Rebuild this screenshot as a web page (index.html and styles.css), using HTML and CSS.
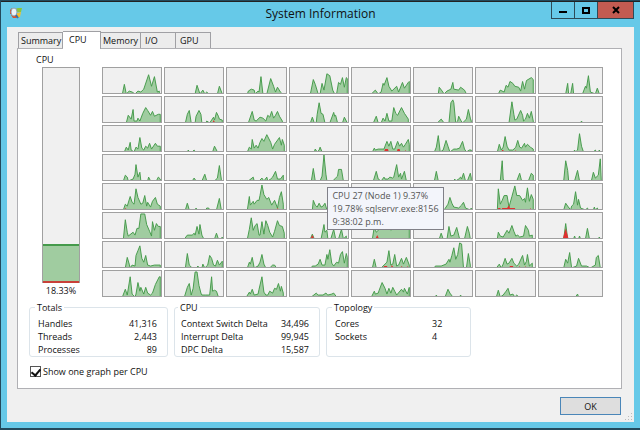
FILE: index.html
```html
<!DOCTYPE html>
<html lang="en">
<head>
  <meta charset="UTF-8" />
  <meta name="viewport" content="width=device-width, initial-scale=1" />
  <title>System Information</title>
  <link rel="stylesheet" href="styles.css">
</head>
<body>
  <div class="window">
    <header class="titlebar">
      <svg class="app-icon" width="14" height="14" viewBox="0 0 14 14" aria-hidden="true">
        <path d="M6 3 L9 2 L13 2 L12 6 L8 6 Z" fill="#8cc63c" />
        <path d="M8 7 L12 6 L11 11 L8 12 Z" fill="#f2c12e" />
        <path d="M2 9 L6 8 L8 12 L4 12 Z" fill="#d8532b" />
        <path d="M1 4 L3 2 L3 8 L1 8 Z" fill="#d8532b" />
        <ellipse cx="5" cy="6" rx="3" ry="4" fill="#e9f2f8" stroke="#8fa0ae" />
        <path d="M7 9 L9 12" stroke="#3b6ea8" stroke-width="2" />
      </svg>
      <h1 class="title">System Information</h1>
      <div class="window-buttons">
        <button class="minimize" aria-label="Minimize"><svg width="10" height="10" viewBox="0 0 10 10"><path d="M1 7H9" stroke="#000" stroke-width="2" /></svg></button>
        <button class="maximize" aria-label="Maximize"><svg width="10" height="10" viewBox="0 0 10 10"><rect x="2" y="3" width="6" height="5" fill="none" stroke="#000" stroke-width="2" /></svg></button>
        <button class="close" aria-label="Close"><svg width="10" height="10" viewBox="0 0 10 10"><path d="M2 2L8 8M8 2L2 8" stroke="#000" stroke-width="2" /></svg></button>
      </div>
    </header>

    <div class="client">
      <nav class="tabs" role="tablist">
        <button class="tab tab-summary" role="tab">Summary</button>
        <button class="tab tab-cpu active" role="tab" aria-selected="true">CPU</button>
        <button class="tab tab-memory" role="tab">Memory</button>
        <button class="tab tab-io" role="tab">I/O</button>
        <button class="tab tab-gpu" role="tab">GPU</button>
      </nav>

      <main class="panel">
        <h2 class="section-label">CPU</h2>
        <div class="usage">
          <div class="gauge-column">
            <div class="gauge"><div class="gauge-fill"></div></div>
            <div class="gauge-value">18.33%</div>
          </div>
          <div class="graphs" id="graphs">
            <div class="tooltip" role="tooltip">CPU 27 (Node 1) 9.37%<br>19.78% sqlservr.exe:8156<br>9:38:02 p.m.</div>
          </div>
        </div>

        <div class="groups">
          <fieldset class="group">
            <legend>Totals</legend>
            <table>
              <tr><th scope="row">Handles</th><td>41,316</td></tr>
              <tr><th scope="row">Threads</th><td>2,443</td></tr>
              <tr><th scope="row">Processes</th><td>89</td></tr>
            </table>
          </fieldset>
          <fieldset class="group group-cpu">
            <legend>CPU</legend>
            <table>
              <tr><th scope="row">Context Switch Delta</th><td>34,496</td></tr>
              <tr><th scope="row">Interrupt Delta</th><td>99,945</td></tr>
              <tr><th scope="row">DPC Delta</th><td>15,587</td></tr>
            </table>
          </fieldset>
          <fieldset class="group group-topology">
            <legend>Topology</legend>
            <table>
              <tr><th scope="row">Cores</th><td>32</td></tr>
              <tr><th scope="row">Sockets</th><td>4</td></tr>
            </table>
          </fieldset>
        </div>

        <div class="option">
          <input type="checkbox" id="per-cpu" checked />
          <label for="per-cpu">Show one graph per CPU</label>
        </div>
      </main>

      <footer class="actions">
        <button class="ok">OK</button>
      </footer>
      <svg class="grip" width="8" height="8" viewBox="0 0 8 8" fill="#bbb" aria-hidden="true">
        <path d="M6 0h1v1h-1zM3 3h1v1h-1zM6 3h1v1h-1zM0 6h1v1h-1zM3 6h1v1h-1zM6 6h1v1h-1z" />
      </svg>
    </div>
  </div>
  <script src="graphs.js"></script>
</body>
</html>
```
FILE: graphs.js
```js
// One entry per CPU, left to right and top to bottom: "x,load x,load ..."
const cpus = [
  '20,0 22,9 24,0 27,2 30,1 33,0 36,2 39,1 42,4 47,19 50,7 53,17 56,1 58,2',
  '31,0 33,8 36,0 39,3 41,0 43,1 45,0 54,0 56,7 59,0',
  '21,0 22,2 25,4 28,3 29,0 32,2 33,1 35,17 37,0 41,0 45,15 48,7 50,1 52,6 55,1 57,0',
  '21,0 24,14 26,9 29,0 31,0 33,10 35,3 38,20 41,18 44,3 46,0 48,0 50,11 52,9 54,16 56,6 58,16 59,15',
  '20,0 24,3 27,0 30,1 32,10 33,8 36,16 38,7 41,2 46,7 48,1 52,11 54,5 58,11 59,12',
  '25,0 26,6 29,2 31,0 34,2 38,4 40,11 41,4 46,3 48,6 52,3 54,0',
  '23,0 25,3 29,1 31,8 33,6 35,12 38,10 40,7 44,6 46,2 48,12 50,4 52,13 57,16 59,14',
  '27,0 29,10 30,0 32,0 34,10 35,0 44,0 47,7 48,5 50,18 52,1 57,0 59,5 61,0',

  '24,0 26,7 29,3 31,13 32,1 35,1 36,4 38,1 41,9 44,15 46,12 49,7 51,11 53,6 57,8 59,8',
  '21,0 23,8 25,12 27,0 31,0 32,6 35,12 37,8 38,0 42,0 43,1 46,0 50,5 51,2 53,10 55,6 56,3 59,2',
  '22,0 26,11 28,2 30,1 34,5 37,4 40,1 42,7 44,5 46,11 48,4 50,7 52,11 54,6 57,1',
  '21,0 23,5 25,0 27,0 28,8 30,20 32,9 34,8 36,0 41,0 45,10 46,6 47,7 49,0 54,0 56,5 59,0',
  '22,0 25,6 27,0 30,0 32,4 34,1 36,9 38,1 41,1 43,15 45,9 47,7 51,15 54,9 58,3',
  '24,0 28,3 31,0 36,0 38,20 40,23 41,20 43,0 45,1 46,6 48,2 50,0 52,1 54,3 56,13 58,4 59,1',
  '34,0 37,21 39,8 40,2 42,3 46,12 48,7 49,1 51,3 53,9 55,4 57,11 59,1',
  '42,0 43,1 44,0',

  '22,0 24,4 26,1 28,9 29,1 32,0 34,4 36,2 38,14 40,3 42,1 44,5 46,3 48,8 50,2 54,8 56,5 59,5',
  '23,0 24,1 25,0 28,0 30,1 31,0 49,0 51,5 53,1 54,0',
  '21,0 23,4 25,2 26,12 28,3 30,6 32,3 34,9 36,13 38,10 41,17 45,9 47,2 49,7 54,14 56,6 57,12 59,6',
  '25,0 26,2 28,0 30,1 31,4 33,0',
  '21,0 23,3 24,1 27,2 33,2 34,5 36,10 38,5 40,10 42,2 44,2 47,10 49,5 51,8 53,4 55,7 58,12 59,7',
  '21,0 23,4 25,16 27,0 30,1 33,11 35,5 37,0 41,2 44,2 47,3 50,10 52,2 54,0 57,1 59,1',
  '22,0 24,7 26,1 28,4 30,15 32,5 34,1 38,1 41,4 43,11 45,4 47,3 50,8 51,4 53,7 56,4 59,2',
  '35,0 36,1 37,0 39,1 41,18 43,5 45,0 55,0 57,1 58,0 60,0 61,1 62,0',

  '21,0 23,5 25,3 26,0 31,1 33,6 34,16 36,3 38,8 39,0 46,0 47,3 49,0 55,0 57,3 59,1',
  '28,0 30,2 32,0 38,0 41,6 43,0 51,0 54,2 56,15 58,1',
  '22,0 27,3 28,0 33,0 36,2 38,0 41,3 42,0 45,1 47,3 50,9 52,1 55,1 58,5',
  '22,0 24,12 26,0 31,0 33,4 35,26 37,6 38,0 44,0 47,2 49,4 50,11 53,11 55,0',
  '22,0 25,9 27,1 30,0 33,3 34,1 37,1 39,3 42,2 43,3 46,16 48,3 50,7 51,1 54,9 56,0',
  '21,0 23,9 25,0 41,0 42,1 43,0 46,1 48,3 49,1 51,7 53,0 55,0 58,7 59,2',
  '25,0 27,20 28,1 29,0 42,0 45,7 47,0 54,0 57,7 59,5',
  '25,0 27,20 29,10 30,0 36,0 39,10 41,0 53,0 55,8 57,2 60,5 62,22 63,0',

  '21,0 23,5 25,3 28,13 30,7 32,5 34,21 36,12 39,5 41,6 43,14 45,3 46,7 49,2 51,8 54,12 56,5 59,3',
  '21,0 23,6 25,0 31,0 32,1 33,0 42,0 43,1 45,1 46,0 53,0 56,11 58,0',
  '21,0 23,13 24,4 27,8 28,5 31,9 33,9 34,14 36,25 38,15 41,10 43,12 46,4 49,9 52,1 54,12 56,18 58,5',
  '23,0 24,9 26,4 28,2 30,6 32,2 34,3 36,6 38,0',
  '22,0 24,6 27,2 34,9 38,3 44,8 50,2 55,7',
  '31,0 35,5 37,12 39,6 41,2 46,1 49,4 51,7 53,1 58,0 59,1',
  '22,0 23,21 25,5 27,9 29,14 32,14 34,2 37,13 40,24 42,14 45,14 48,9 50,11 51,7 53,22 55,8 57,15 59,10',
  '25,0 27,6 29,3 32,0 33,3 35,5 37,18 39,4 40,10 42,1 47,0 49,1 50,0 55,0 56,2 57,0 59,1 60,0',

  '21,0 23,19 25,6 26,2 31,6 33,3 35,10 37,10 39,25 43,25 45,14 48,7 50,2 51,17 53,8 55,15 57,12 59,12',
  '20,0 23,3 28,3 30,5 31,3 33,12 35,4 36,14 38,3 40,0 51,0 53,5 55,0 58,0 59,1',
  '21,0 23,9 25,21 27,8 29,13 31,15 33,3 34,3 36,17 38,4 40,18 42,13 44,6 47,1 49,7 52,18 54,13 57,12 59,5',
  '21,0 23,4 25,0 32,0 35,14 36,6 38,8 39,0 42,0 45,9 47,0 50,0 53,9 55,0 58,2',
  '21,0 23,12 25,6 28,9 31,14 34,10 36,13 40,8 43,11 47,9 51,14 54,12 59,12',
  '26,0 28,5 30,0 34,0 36,12 38,2 41,3 44,11 46,3 47,0 52,0 55,12 57,5 58,0',
  '22,0 23,6 25,2 28,1 32,8 34,5 37,13 39,7 41,2 43,3 45,1 49,2 51,13 54,8 55,2 58,3',
  '25,0 27,15 29,0 35,0 36,2 37,0 40,0 41,2 42,0 47,0 49,10 51,0 60,0 61,1 62,0',

  '23,0 25,10 27,3 28,0 30,2 33,1 34,12 36,17 38,22 40,9 42,5 44,12 46,2 49,1 53,2 59,2',
  '21,0 23,14 25,2 28,0 32,0 34,1 35,0 38,0 39,3 41,0 44,2 46,12 48,9 50,2 52,1 54,7 56,2 59,6',
  '21,0 23,5 24,3 26,10 28,0 32,1 34,5 36,13 38,3 40,0 44,0 47,2 49,2 51,0',
  '22,0 23,1 26,1 29,3 31,8 33,2 36,2 38,13 39,8 41,18 43,4 45,1 48,5 50,4 52,13 54,16 56,4 58,14 59,10',
  '21,0 23,8 25,0 30,0 33,2 36,5 38,17 40,2 42,3 44,13 46,1 48,2 51,9 53,3 56,10 59,2',
  '21,0 22,1 28,1 33,3 36,8 37,5 39,12 41,20 43,8 45,13 47,25 49,24 51,0 54,0 56,14 58,2',
  '21,0 24,3 26,0 28,3 30,9 32,3 34,4 37,9 39,4 42,1 44,3 48,12 50,2 52,6 53,13 55,1 58,4',
  '25,0 27,8 29,4 31,15 33,0 38,1 40,9 43,1 48,1 52,0 57,2 58,10 60,12 62,0',

  '20,0 23,7 25,1 28,20 30,2 33,0 34,2 36,14 38,5 39,9 42,2 44,9 46,3 49,1 51,3 54,12 58,20 59,20',
  '20,0 23,9 25,13 27,1 29,8 31,25 33,25 35,11 37,3 38,1 42,1 46,1 48,20 49,5 51,6 53,5 55,0',
  '20,0 23,4 24,2 26,7 28,1 32,2 33,7 36,20 38,4 40,1 42,1 44,5 47,3 49,8 51,7 53,13 55,5 56,10 58,3',
  '22,0 27,3 29,1 34,1 37,3 39,1 43,2 45,3 48,0',
  '20,0 23,5 24,2 27,3 28,6 31,14 34,8 36,2 38,8 40,3 42,9 44,5 46,1 51,7 53,4 54,8 57,2 59,9',
  '22,0 23,1 24,0 32,0 35,7 37,3 40,0 47,0 48,1 49,0',
  '21,0 23,6 25,0 28,1 31,5 33,8 35,1 38,2 40,0 42,1 44,0',
  '37,0 39,2 40,0'
];

// Kernel time, in red, for the CPUs that have any
const kernel = {
  9: '49,0 50,2 52,0',
  20: '33,0 34,2 37,2 38,0 46,0 47,2 49,2 50,0 54,0 55,1 56,0',
  22: '26,0 27,1 28,1 29,0 40,0 41,1 42,0',
  32: '22,0 23,1 25,0',
  34: '51,0 52,1 54,0',
  38: '22,0 23,1 25,1 26,0 27,1 30,1 32,1 34,4 35,1 40,1 41,0 55,0 56,1 57,0',
  43: '21,0 23,3 25,0',
  44: '24,0 26,3 28,0',
  47: '24,0 27,10 30,0',
  52: '32,0 33,1 36,1 37,0 40,0 41,2 43,0 50,0 51,1 53,0 56,0 57,1 58,0',
  54: '34,0 35,1 38,1 39,0 44,0 45,1 46,0 50,0 51,1 52,0'
};

const HEIGHT = 26;
const BASE = HEIGHT + 1; // idle stretches run just below the visible area
const graphs = document.getElementById('graphs');

function area(data, name) {
  const points = data.split(' ').map(p => p.split(',').map(Number));
  const line = points.map(([x, load]) => `${x},${load ? HEIGHT - load : BASE}`).join(' ');
  const first = points[0][0];
  const last = points[points.length - 1][0];
  return `<polygon class="${name}" points="${first},${BASE} ${line} ${last},${BASE}" />`;
}

cpus.forEach((data, i) => {
  const width = i % 8 === 7 ? 64 : 60; // last column is a bit wider
  const cell = document.createElement('div');
  cell.className = 'graph';
  cell.innerHTML = `
    <svg viewBox="0 0 ${width} ${HEIGHT}" preserveAspectRatio="none">
      ${area(data, 'load')}
      ${kernel[i] ? area(kernel[i], 'kernel') : ''}
    </svg>`;
  graphs.appendChild(cell);
});
```
FILE: styles.css
```css
* {
  box-sizing: border-box;
}
body {
  margin: 0;
  min-height: 100vh;
  display: flex;
  background: #234a5c;
  font-family: "Open Sans", "Noto Sans", sans-serif;
  font-size: 9px;
  line-height: 13px;
  color: #111;
}
button {
  font: inherit;
  color: inherit;
  padding: 0;
}
.window {
  flex: 1;
  display: flex;
  flex-direction: column;
  margin: 1px 0 2px 1px;
  padding: 0 6px 6px;
  background: #66c9e8;
  border-top: 1px solid #222;
}

/* Title bar */
.titlebar {
  display: grid;
  grid-template-columns: 83px 1fr 83px;
  height: 25px;
}
.app-icon {
  margin: 4px 0 0 2px;
}
.title {
  margin: 0;
  font-size: 12px;
  font-weight: 400;
  line-height: 24px;
  text-align: center;
}
.window-buttons {
  display: flex;
  height: 17px;
}
.window-buttons button {
  display: flex;
  align-items: center;
  justify-content: center;
  width: 23px;
  background: none;
  border: 1px solid #2d4b58;
  border-top: 0;
  border-right: 0;
}
.window-buttons .close {
  flex: 1;
  background: #c35b51;
  border-right: 1px solid #2d4b58;
}

/* Tabs */
.client {
  position: relative;
  flex: 1;
  display: flex;
  flex-direction: column;
  padding: 4px 12px 0 10px;
  background: #f0f0f0;
}
.tabs {
  display: flex;
  align-items: flex-end;
  height: 17px;
  padding-left: 1px;
}
.tab {
  height: 16px;
  background: #ececec;
  border: 1px solid #a0a0a4;
  border-left-width: 0;
  border-bottom: 0;
  text-align: left;
  padding-left: 4px;
}
.tab-summary {
  width: 45px;
  border-left-width: 1px;
  padding-left: 2px;
}
.tab.active {
  width: 38px;
  height: 18px;
  margin-bottom: -1px;
  padding: 0 0 3px 6px;
  background: #fff;
  z-index: 1;
}
.tab-memory {
  width: 40px;
  padding-left: 2px;
}
.tab-io, .tab-gpu {
  width: 35px;
}
.panel {
  flex: 1;
  padding: 4px 18px 8px 11px;
  background: #fff;
  border: 1px solid #b0b0b4;
}

/* Gauge and graphs */
.section-label {
  margin: 0 0 1px 7px;
  font-size: 9px;
  font-weight: 400;
}
.usage {
  display: flex;
  gap: 22px;
  padding-left: 13px;
}
.gauge-column {
  display: flex;
  flex-direction: column;
  width: 38px;
}
.gauge {
  flex: 1;
  display: flex;
  align-items: flex-end;
  background: #f0f0f0;
  border: 1px solid #a0a0a0;
  border-bottom: 0;
}
.gauge-fill {
  width: 100%;
  height: 18%;
  background: #a0cca0;
  border-top: 2px solid #459a4b;
  border-bottom: 2px solid #c84038;
}
.gauge-value {
  padding-top: 1px;
  text-align: center;
}
.graphs {
  position: relative;
  flex: 1;
  display: grid;
  grid-template-columns: repeat(7, 60fr) 65fr;
  gap: 2px;
}
.graph {
  height: 27px;
  background: #f0f0f0;
  border: 1px solid #a0a0a0;
}
.graph svg {
  display: block;
  width: 100%;
  height: 100%;
}
.load {
  fill: #a0cca0;
  stroke: #459a4b;
}
.kernel {
  fill: #e03030;
}
.tooltip {
  position: absolute;
  top: 120px;
  left: 45%;
  padding: 1px 4px;
  background: #f3f5fb;
  border: 1px solid #808088;
  color: #555;
  white-space: nowrap;
}

/* Totals */
.groups {
  display: flex;
  gap: 6px;
  margin-top: 4px;
}
.group {
  width: 139px;
  height: 56px;
  margin: 0;
  padding: 3px 10px 0 8px;
  border: 1px solid #dce4ea;
  border-radius: 3px;
}
.group-cpu {
  width: 146px;
  padding-left: 6px;
}
.group-topology {
  width: 145px;
}
legend {
  margin-left: -3px;
  padding: 0 2px;
}
table {
  width: 100%;
  border-collapse: collapse;
}
th {
  padding: 0;
  font-weight: 400;
  text-align: left;
}
td {
  padding: 0;
  text-align: right;
}
.group-topology td {
  width: 28px;
  text-align: left;
}
.option {
  display: flex;
  align-items: center;
  gap: 2px;
  margin-top: 8px;
}
.option input {
  appearance: none;
  display: flex;
  justify-content: center;
  width: 11px;
  height: 11px;
  margin: 0 0 0 1px;
  border: 1px solid #555;
}
.option input:checked::after {
  content: "";
  width: 4px;
  height: 7px;
  border: solid #111;
  border-width: 0 2px 2px 0;
  transform: rotate(40deg);
}

/* Bottom row */
.actions {
  display: flex;
  justify-content: flex-end;
  padding: 8px 1px 7px;
}
.ok {
  width: 61px;
  height: 18px;
  background: #dedede;
  border: 1px solid #4a86b8;
}
.grip {
  position: absolute;
  right: 1px;
  bottom: 1px;
}
```
